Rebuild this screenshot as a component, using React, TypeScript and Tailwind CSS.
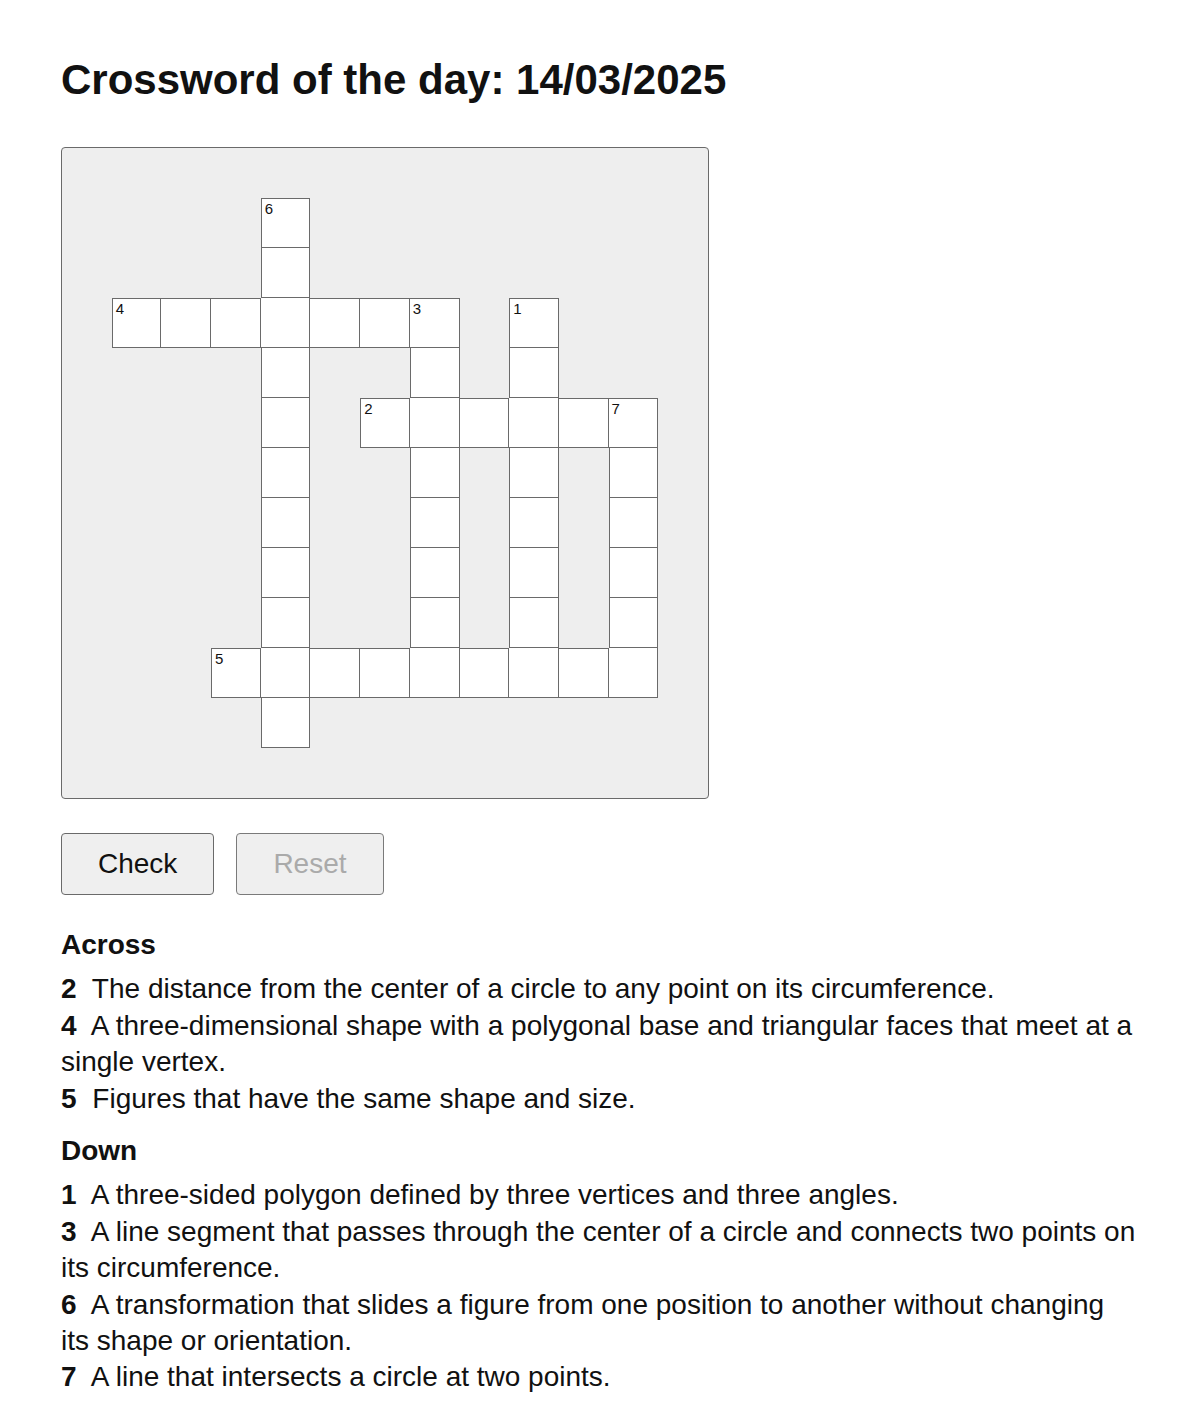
import clsx from "clsx";

type Word = { num: number; row: number; col: number; dir: "across" | "down"; answer: string };

const SIZE = 13;

const words: Word[] = [
  { num: 1, row: 3, col: 9, dir: "down", answer: "TRIANGLE" },
  { num: 2, row: 5, col: 6, dir: "across", answer: "RADIUS" },
  { num: 3, row: 3, col: 7, dir: "down", answer: "DIAMETER" },
  { num: 4, row: 3, col: 1, dir: "across", answer: "PYRAMID" },
  { num: 5, row: 10, col: 3, dir: "across", answer: "CONGRUENT" },
  { num: 6, row: 1, col: 4, dir: "down", answer: "TRANSLATION" },
  { num: 7, row: 5, col: 11, dir: "down", answer: "SECANT" },
];

const across = [
  { num: 2, text: "The distance from the center of a circle to any point on its circumference." },
  { num: 4, text: "A three-dimensional shape with a polygonal base and triangular faces that meet at a single vertex." },
  { num: 5, text: "Figures that have the same shape and size." },
];

const down = [
  { num: 1, text: "A three-sided polygon defined by three vertices and three angles." },
  { num: 3, text: "A line segment that passes through the center of a circle and connects two points on its circumference." },
  { num: 6, text: "A transformation that slides a figure from one position to another without changing its shape or orientation." },
  { num: 7, text: "A line that intersects a circle at two points." },
];

function buildBoard() {
  const filled: boolean[][] = Array.from({ length: SIZE }, () => Array(SIZE).fill(false));
  const numbers: (number | null)[][] = Array.from({ length: SIZE }, () => Array(SIZE).fill(null));
  for (const w of words) {
    numbers[w.row][w.col] = w.num;
    for (let i = 0; i < w.answer.length; i++) {
      const r = w.dir === "down" ? w.row + i : w.row;
      const c = w.dir === "across" ? w.col + i : w.col;
      filled[r][c] = true;
    }
  }
  return { filled, numbers };
}

function Board() {
  const { filled, numbers } = buildBoard();
  const cells = [];
  for (let r = 0; r < SIZE; r++) {
    for (let c = 0; c < SIZE; c++) {
      if (!filled[r][c]) {
        cells.push(<div key={`${r}-${c}`} />);
        continue;
      }
      // shared edges are drawn once: right/bottom always, left/top only at a word's edge
      const openLeft = c === 0 || !filled[r][c - 1];
      const openTop = r === 0 || !filled[r - 1][c];
      cells.push(
        <div
          key={`${r}-${c}`}
          className={clsx(
            "relative bg-white border-[#6a6a6a] border-r border-b",
            openLeft && "border-l",
            openTop && "border-t"
          )}
        >
          {numbers[r][c] && (
            <span className="absolute left-[3px] top-[2px] text-[15px] leading-4 text-[#111]">
              {numbers[r][c]}
            </span>
          )}
        </div>
      );
    }
  }
  return (
    <div className="w-[648px] h-[652px] border border-[#6a6a6a] rounded-[4px] bg-[#eee]">
      <div className="grid grid-cols-13 grid-rows-13 w-full h-full">{cells}</div>
    </div>
  );
}

function ClueList({ title, clues, className }: { title: string; clues: { num: number; text: string }[]; className?: string }) {
  return (
    <section className={className}>
      <h2 className="font-bold mb-2">{title}</h2>
      <ul>
        {clues.map((c) => (
          <li key={c.num}>
            <strong className="mr-2">{c.num}</strong> {c.text}
          </li>
        ))}
      </ul>
    </section>
  );
}

export default function App() {
  return (
    <div className="min-h-[1414px] bg-white pl-[61px] pr-[62px] pt-[56px] font-['Liberation_Sans',Arial,sans-serif] text-[#111] text-[28px] leading-[1.3]">
      <h1 className="text-[42px] leading-[48px] font-bold mb-[43px]">Crossword of the day: 14/03/2025</h1>
      <Board />
      <div className="flex gap-[22px] mt-[34px]">
        <button className="h-[62px] px-[36px] bg-[#efefef] border border-[#6a6a6a] rounded-[4px] text-[#111]">
          Check
        </button>
        <button disabled className="h-[62px] px-[36px] bg-[#efefef] border border-[#7a7a7a] rounded-[4px] text-[#aaa]">
          Reset
        </button>
      </div>
      <ClueList title="Across" clues={across} className="mt-[32px]" />
      <ClueList title="Down" clues={down} className="mt-4" />
    </div>
  );
}
